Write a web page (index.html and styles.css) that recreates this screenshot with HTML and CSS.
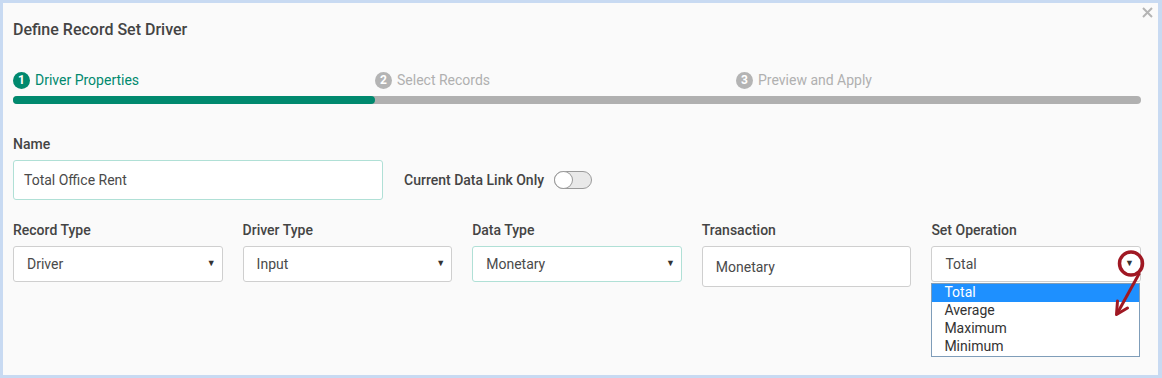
FILE: index.html
```html
<!DOCTYPE html>
<html lang="en">
<head>
    <meta charset="UTF-8">
    <title>Define Record Set Driver</title>
    <link rel="stylesheet" href="styles.css">
</head>
<body>
    <div class="dialog">
        <div class="close">
            <svg width="11" height="11" viewBox="0 0 11 11"><path d="M1 1L10 10M10 1L1 10" stroke="#b4b4b4" stroke-width="2"/></svg>
        </div>

        <div class="title">Define Record Set Driver</div>

        <div class="steps">
            <div class="step active"><span class="step-num">1</span>Driver Properties</div>
            <div class="step"><span class="step-num">2</span>Select Records</div>
            <div class="step"><span class="step-num">3</span>Preview and Apply</div>
        </div>
        <div class="progress">
            <div class="progress-fill" style="width: 32.1%"></div>
        </div>

        <div class="name-row">
            <div class="field name-field">
                <div class="label">Name</div>
                <div class="input focus">Total Office Rent</div>
            </div>
            <div class="toggle-field">
                <span class="label">Current Data Link Only</span>
                <span class="toggle"><span class="knob"></span></span>
            </div>
        </div>

        <div class="fields">
            <div class="field">
                <div class="label">Record Type</div>
                <div class="select">Driver<span class="caret">▼</span></div>
            </div>
            <div class="field">
                <div class="label">Driver Type</div>
                <div class="select">Input<span class="caret">▼</span></div>
            </div>
            <div class="field">
                <div class="label">Data Type</div>
                <div class="select focus">Monetary<span class="caret">▼</span></div>
            </div>
            <div class="field">
                <div class="label">Transaction</div>
                <div class="input tall">Monetary</div>
            </div>
            <div class="field set-op">
                <div class="label">Set Operation</div>
                <div class="select">Total<span class="caret">▼</span>
                    <!-- annotation over the open dropdown -->
                    <svg class="mark" width="40" height="80" viewBox="0 0 40 80">
                        <circle cx="20" cy="21.5" r="11.5" fill="none" stroke="#a01823" stroke-width="3.5"/>
                        <path d="M28.5 31L7 70" stroke="#a01823" stroke-width="3" fill="none"/>
                        <path d="M5.5 72.5L6.5 59M5.5 72.5L16.5 66" stroke="#a01823" stroke-width="3" fill="none" stroke-linecap="round"/>
                    </svg>
                </div>
                <div class="options">
                    <div class="option selected">Total</div>
                    <div class="option">Average</div>
                    <div class="option">Maximum</div>
                    <div class="option">Minimum</div>
                </div>
            </div>
        </div>
    </div>
</body>
</html>
```

FILE: styles.css
```css
* {
    margin: 0;
    padding: 0;
    box-sizing: border-box;
}

body {
    font-family: Roboto, "Liberation Sans", sans-serif;
    background: #c8daf2;
    padding: 3px 4px 3px 3px;
    height: 378px;
}

.dialog {
    position: relative;
    background: #fafafa;
    height: 372px;
    padding: 17px 17px 0 10px;
}

.close {
    position: absolute;
    top: 4px;
    right: 5px;
    line-height: 0;
}

.title {
    font-size: 16px;
    font-weight: 500;
    color: #444;
    line-height: 20px;
}

.steps {
    display: grid;
    grid-template-columns: 362px 361px 1fr;
    margin-top: 32px;
}

.step {
    display: flex;
    align-items: center;
    font-size: 14px;
    line-height: 17px;
    color: #b0b0b0;
}

.step-num {
    width: 17px;
    height: 17px;
    border-radius: 50%;
    background: #b4b4b4;
    color: white;
    font-size: 12px;
    font-weight: 700;
    display: flex;
    align-items: center;
    justify-content: center;
    margin-right: 5px;
}

.step.active {
    color: #00896e;
}

.step.active .step-num {
    background: #00896e;
}

.progress {
    height: 8px;
    margin-top: 7px;
    border-radius: 4px;
    background: #b0b0b0;
}

.progress-fill {
    height: 100%;
    border-radius: 4px;
    background: #00896e;
}

.label {
    font-size: 14px;
    font-weight: 500;
    color: #444;
    line-height: 16px;
}

.name-row {
    display: flex;
    align-items: flex-end;
    margin-top: 32px;
}

.name-field {
    width: 370px;
}

.field .label {
    margin-bottom: 8px;
}

.input,
.select {
    position: relative;
    background: white;
    border: 1px solid #cfcfcf;
    border-radius: 3px;
    font-size: 14px;
    color: #4a4a4a;
    display: flex;
    align-items: center;
}

.input {
    height: 40px;
    padding-left: 10px;
}

.input.tall {
    height: 41px;
    padding-left: 13px;
}

.select {
    height: 36px;
    padding-left: 13px;
}

.focus {
    border-color: #b0e0d6;
}

.caret {
    position: absolute;
    right: 6px;
    top: 11px;
    font-size: 9px;
    color: #333;
}

.toggle-field {
    display: flex;
    align-items: center;
    height: 40px;
    margin-left: 21px;
}

.toggle {
    width: 38px;
    height: 18px;
    margin-left: 10px;
    border: 1px solid #9a9a9a;
    border-radius: 9px;
    background: #e9e9e9;
    display: flex;
    align-items: center;
}

.knob {
    width: 19px;
    height: 18px;
    border-radius: 50%;
    background: white;
    border: 1px solid #9a9a9a;
    margin-left: -1px;
}

.fields {
    display: grid;
    grid-template-columns: repeat(5, 1fr);
    column-gap: 20px;
    margin-top: 22px;
}

.set-op {
    position: relative;
}

.options {
    position: absolute;
    left: 0;
    right: 1px;
    top: 61px;
    background: white;
    border: 1px solid #7f9db9;
    font-size: 14px;
    color: #333;
}

.option {
    height: 18px;
    line-height: 17px;
    padding-left: 12px;
}

.option.selected {
    background: #1e90ff;
    color: white;
}

.mark {
    position: absolute;
    left: 179px;
    top: -5px;
    z-index: 2;
}
```
